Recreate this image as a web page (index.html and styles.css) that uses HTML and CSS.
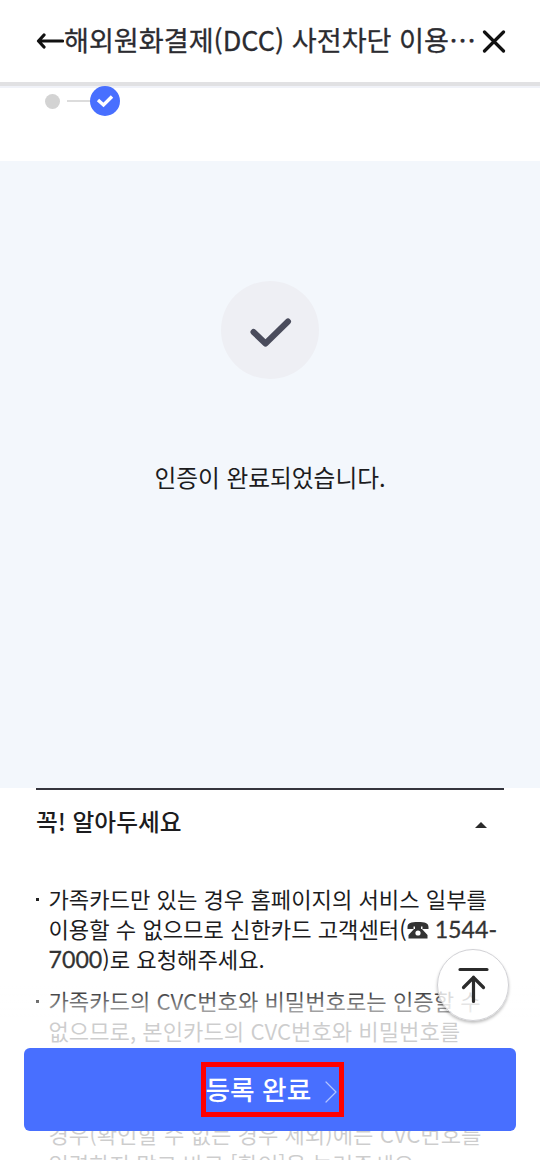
FILE: index.html
```html
<!DOCTYPE html>
<html lang="ko">
<head>
    <meta charset="UTF-8">
    <meta name="viewport" content="width=device-width, initial-scale=1.0">
    <title>해외원화결제(DCC) 사전차단 이용</title>
    <link rel="stylesheet" href="styles.css">
</head>
<body>
    <header class="header">
        <svg class="back" width="28" height="18" viewBox="0 0 28 18">
            <path d="M8 3L2.500 9l5.500 6M2.500 9h24"/>
        </svg>
        <h1>해외원화결제(DCC) 사전차단 이용…</h1>
        <svg class="close" width="24" height="24" viewBox="0 0 24 24">
            <path d="M2.500 3l19 19M21.500 3l-19 19"/>
        </svg>
    </header>

    <div class="steps">
        <span class="dot"></span>
        <span class="bar"></span>
        <span class="step-on">
            <svg width="30" height="30" viewBox="0 0 30 30">
                <path d="M8 14l5.500 5L22 10.500"/>
            </svg>
        </span>
    </div>

    <section class="result">
        <div class="circle">
            <svg width="98" height="98" viewBox="0 0 98 98">
                <path d="M32.500 51l12 11.500L67 40.500"/>
            </svg>
        </div>
        <p>인증이 완료되었습니다.</p>
    </section>

    <section class="notice">
        <div class="notice-title">
            <h2>꼭! 알아두세요</h2>
            <span class="arrow-up"></span>
        </div>
        <ul>
            <li>가족카드만 있는 경우 홈페이지의 서비스 일부를<br>이용할 수 없으므로 신한카드 고객센터(<span class="tel"><svg class="phone" width="22" height="18" viewBox="0 0 22 18"><path d="M.5 6C.5 2 4 1 11 1s10.500 1 10.500 5v2h-6V5.500h-1.500V8h1l5.500 6v3.500h-19V14L7 8h1V5.500H6.500V8h-6z"/><circle cx="11" cy="12" r="2.600"/></svg> 1544-<br>7000</span>)로 요청해주세요.</li>
            <li>가족카드의 CVC번호와 비밀번호로는 인증할 수<br>없으므로, 본인카드의 CVC번호와 비밀번호를<br>입력해주세요.</li>
            <li><br>경우(확인할 수 없는 경우 제외)에는 CVC번호를<br>입력하지 말고 바로 [확인]을 눌러주세요.</li>
        </ul>
    </section>

    <div class="bottom">
        <button class="submit">
            <span class="mark"><span class="label">등록 완료</span>
                <svg width="14" height="24" viewBox="0 0 14 24">
                    <path d="M2 2l10 10L2 22"/>
                </svg>
            </span>
        </button>
    </div>

    <button class="top">
        <svg width="32" height="38" viewBox="0 0 32 38">
            <path d="M3 3.500h27M16.500 35.500V11M6.500 21.500l10-10 10 10"/>
        </svg>
    </button>
</body>
</html>
```

FILE: styles.css
```css
*{
    box-sizing: border-box;
}
body{
    margin: 0;
    height: 1160px;
    overflow: hidden;
    background-color: #fff;
    color: #1c1c1e;
    font-family: 'Noto Sans CJK KR', sans-serif;
}
h1, h2, p, ul{
    margin: 0;
    padding: 0;
}
svg{
    fill: none;
    stroke-linecap: round;
    stroke-linejoin: round;
    flex-shrink: 0;
}
button{
    border: 0;
    padding: 0;
    font-family: inherit;
    cursor: pointer;
}

.header{
    display: flex;
    align-items: center;
    height: 86px;
    padding: 0 34px 0 36px;
    border-bottom: 4px solid #e1e1e3;
    box-shadow: 0 2px 0 #f0f2f8;
}
.header h1{
    flex: 1;
    padding-bottom: 2px;
    font-size: 27.1px;
    font-weight: 400;
    line-height: 40px;
    color: #2b2b30;
    -webkit-text-stroke: 0.3px #2b2b30;
    white-space: nowrap;
}
.back, .close{
    stroke: #111;
    stroke-width: 3.2;
}

.steps{
    display: flex;
    align-items: center;
    height: 75px;
    padding: 0 45px 46px;
}
.dot{
    width: 15px;
    height: 15px;
    margin-top: 1px;
    border-radius: 50%;
    background-color: #d3d3d3;
}
.bar{
    width: 23px;
    height: 2px;
    margin-left: 7px;
    background-color: #dcdcdc;
}
.step-on{
    width: 30px;
    height: 30px;
    border-radius: 50%;
    background-color: #486fff;
}
.step-on svg{
    display: block;
    stroke: #fff;
    stroke-width: 3.4;
    stroke-linecap: butt;
    stroke-linejoin: miter;
}

.result{
    display: flex;
    flex-direction: column;
    align-items: center;
    height: 627px;
    padding-top: 120px;
    background-color: #f3f7fc;
}
.circle{
    width: 98px;
    height: 98px;
    border-radius: 50%;
    background-color: #eeeff4;
}
.circle svg{
    stroke: #4a4c5c;
    stroke-width: 6;
}
.result p{
    margin-top: 80px;
    font-size: 23.7px;
    line-height: 36px;
}

.notice{
    margin: 0 36px;
    border-top: 2px solid #35353d;
}
.notice-title{
    display: flex;
    align-items: center;
    justify-content: space-between;
    height: 63px;
    padding-right: 17px;
}
.notice h2{
    padding-bottom: 1px;
    font-size: 23.7px;
    font-weight: 500;
    line-height: 36px;
}
.arrow-up{
    margin-top: 6px;
    border: 6px solid transparent;
    border-top: 0;
    border-bottom-color: #2b2b2b;
}
.notice ul{
    padding-top: 30px;
    list-style: none;
}
.notice li{
    position: relative;
    margin-bottom: 12px;
    padding-left: 12.5px;
    font-size: 22.15px;
    line-height: 30px;
    white-space: nowrap;
}
.notice li:last-child{
    padding-top: 1px;
}
.notice li::before{
    content: '';
    position: absolute;
    left: 0;
    top: 15px;
    width: 3px;
    height: 3px;
    background-color: #222;
}
.tel{
    font-family: Lato, 'Noto Sans CJK KR', sans-serif;
    font-size: 23.2px;
    line-height: 0;
    color: #333;
    -webkit-text-stroke: 0.3px #333;
}
.phone{
    vertical-align: -1px;
    fill: #333;
}
.phone circle{
    fill: #fff;
}

/* fades the notice text out under the fixed button */
.bottom{
    position: fixed;
    left: 0;
    right: 0;
    bottom: 0;
    height: 174px;
    padding: 62px 24px 0;
    background: linear-gradient(rgba(255,255,255,0) 0, rgba(255,255,255,0.78) 34px);
}
.submit{
    display: flex;
    align-items: center;
    justify-content: center;
    width: 100%;
    height: 83px;
    border-radius: 6px;
    background-color: #486fff;
}
.mark{
    display: flex;
    align-items: center;
    justify-content: space-between;
    width: 143px;
    height: 55px;
    margin-left: 4px;
    padding-right: 1px;
    border: 5px solid #f00;
    color: #fff;
    font-size: 26.7px;
    font-weight: 500;
    line-height: 40px;
    white-space: nowrap;
}
.label{
    padding-bottom: 2px;
}
.mark svg{
    margin-top: 4px;
    stroke: #b4c4ff;
    stroke-width: 1.2;
}

.top{
    position: fixed;
    right: 31px;
    top: 949px;
    display: flex;
    align-items: center;
    justify-content: center;
    width: 72px;
    height: 72px;
    border: 1px solid #d0d0d4;
    border-radius: 50%;
    background-color: rgba(255,255,255,0.8);
    box-shadow: 0 2px 3px rgba(0,0,0,0.25);
}
.top svg{
    stroke: #2b2b2b;
    stroke-width: 3.2;
}
```
